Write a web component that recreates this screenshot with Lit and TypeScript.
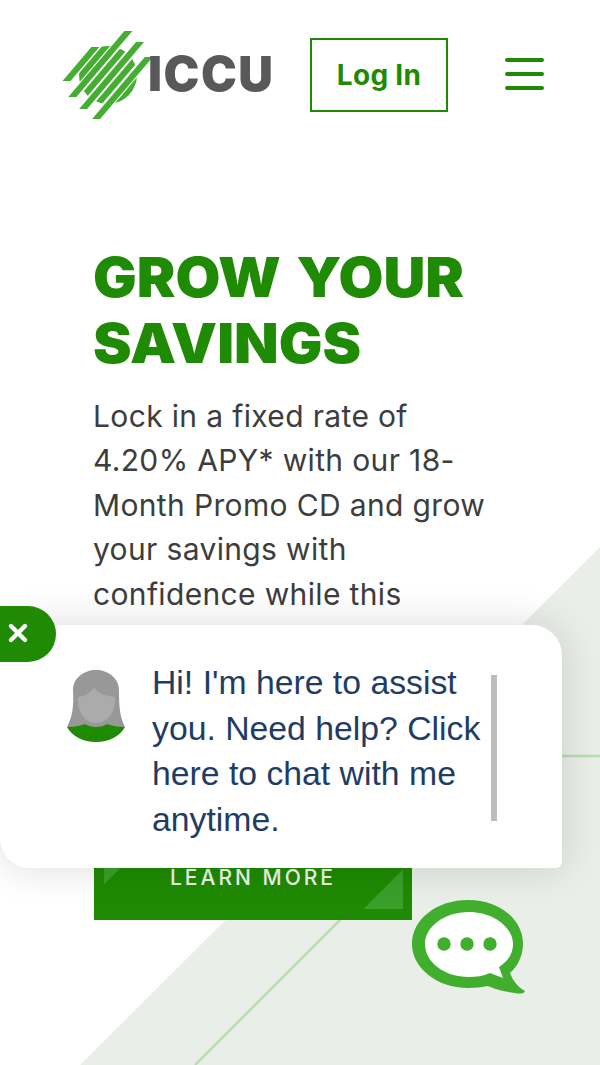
import { LitElement, html, css, svg } from "lit";
import { customElement } from "lit/decorators.js";

// logo stripes: left edge x where each one crosses y=75, then top and bottom y
const LONG_STRIPES = [
  [67.6, 47, 81],
  [87, 31, 97],
  [108, 42, 109],
  [129.5, 57, 119],
];
// these sit between the long ones and get cut by the circle
const SHORT_STRIPES = [77.5, 97.5, 118.5, 139];

const stripe = (x75: number, top: number, bottom: number) => {
  const xTop = x75 + (75 - top) * 0.85;
  const xBottom = x75 - (bottom - 75) * 0.85;
  return svg`<polygon points="${xBottom},${bottom} ${xBottom + 8},${bottom} ${xTop + 8},${top} ${xTop},${top}" fill="#45ad32"></polygon>`;
};

@customElement("app-root")
export class AppRoot extends LitElement {
  static styles = css`
    :host {
      display: block;
      position: relative;
      height: 1065px;
      overflow: hidden;
      background: #fff;
      font-family: "Inter", "Liberation Sans", sans-serif;
    }
    .backdrop {
      position: absolute;
      inset: 0;
    }
    .page {
      position: relative;
    }
    header {
      display: flex;
      align-items: center;
      height: 150px;
      padding-left: 62px;
    }
    .logo {
      width: 248px;
    }
    .logo svg {
      display: block;
      filter: blur(0.6px);
    }
    .login {
      box-sizing: border-box;
      display: flex;
      align-items: center;
      justify-content: center;
      width: 138px;
      height: 74px;
      border: 2px solid #1f8a03;
      color: #1f8a03;
      font-size: 28px;
      font-weight: 700;
      letter-spacing: 0.3px;
    }
    .burger {
      display: flex;
      flex-direction: column;
      gap: 10px;
      width: 39px;
      margin: 0 0 2px 57px;
    }
    .burger span {
      height: 4px;
      border-radius: 2px;
      background: #1f8a03;
    }
    .hero {
      padding: 94px 0 0 93px;
    }
    h1 {
      margin: 0;
      width: 400px;
      color: #1f8a03;
      font-size: 55px;
      line-height: 66px;
      font-weight: 900;
      word-spacing: 4px;
      transform: scaleX(1.055);
      transform-origin: left;
    }
    p {
      margin: 18px 0 0;
      width: 408px;
      color: #3d3d3d;
      font-size: 30px;
      line-height: 44.4px;
      letter-spacing: 0.35px;
    }
    .cta {
      position: relative;
      display: flex;
      justify-content: center;
      box-sizing: border-box;
      width: 318px;
      height: 86px;
      margin: 174px 0 0 1px;
      padding-top: 31px;
      background: #1f8a03;
      color: #eef6ea;
      font-size: 21px;
      font-weight: 500;
      letter-spacing: 3px;
    }
    .cta i {
      position: absolute;
      right: 9px;
      bottom: 11px;
      width: 40px;
      height: 40px;
      background: #3aa02a;
      clip-path: polygon(100% 0, 100% 100%, 0 100%);
    }
    .cta b {
      position: absolute;
      left: 10px;
      top: 10px;
      width: 40px;
      height: 40px;
      background: #3aa02a;
      clip-path: polygon(0 0, 100% 0, 0 100%);
    }
    .chat {
      position: absolute;
      left: 0;
      top: 625px;
      box-sizing: border-box;
      display: flex;
      width: 562px;
      height: 243px;
      padding: 37px 65px 0 60px;
      background: #fff;
      border-radius: 30px 30px 6px 30px;
      box-shadow: 0 0 40px rgba(0, 0, 0, 0.14);
    }
    .avatar {
      flex: none;
      width: 73px;
      height: 73px;
      margin: 8px 19px 0 0;
    }
    .message {
      flex: 1;
      margin-top: -2px;
      color: #1f3d63;
      font-family: "Liberation Sans", Arial, sans-serif;
      font-size: 33.75px;
      line-height: 45.5px;
    }
    .thumb {
      position: absolute;
      left: 491px;
      top: 50px;
      width: 6px;
      height: 146px;
      background: #bdbdbd;
    }
    .close {
      position: absolute;
      left: -30px;
      top: 606px;
      display: flex;
      align-items: center;
      justify-content: flex-end;
      box-sizing: border-box;
      width: 86px;
      height: 56px;
      padding: 0 26px 2px 0;
      border-radius: 28px;
      background: #1f8a03;
    }
    .bubble {
      position: absolute;
      left: 412px;
      top: 900px;
    }
  `;

  render() {
    return html`
      <svg class="backdrop" width="600" height="1065" viewBox="0 0 600 1065">
        <polygon points="600,547 600,1065 80,1065" fill="#e9efe8"></polygon>
        <polyline
          points="600,756 504,756 195,1065"
          fill="none"
          stroke="#b7dcae"
          stroke-width="2.5"
        ></polyline>
      </svg>
      <div class="page">
        <header>
          <div class="logo">
            <svg width="212" height="100" viewBox="62 25 212 100">
              <defs>
                <clipPath id="blob"><circle cx="108" cy="75" r="29"></circle></clipPath>
              </defs>
              ${LONG_STRIPES.map(([x, top, bottom]) => stripe(x, top, bottom))}
              <g clip-path="url(#blob)">
                ${SHORT_STRIPES.map((x) => stripe(x, 30, 120))}
              </g>
              <text
                x="148"
                y="91"
                font-family="Inter, sans-serif"
                font-size="48"
                font-weight="900"
                fill="#58595b"
                textLength="125"
              >ICCU</text>
            </svg>
          </div>
          <div class="login">Log In</div>
          <div class="burger"><span></span><span></span><span></span></div>
        </header>
        <section class="hero">
          <h1>GROW YOUR SAVINGS</h1>
          <p>
            Lock in a fixed rate of 4.20% APY* with our 18-Month Promo CD and
            grow your savings with confidence while this limited time offer
            lasts.
          </p>
          <div class="cta"><b></b>LEARN MORE<i></i></div>
        </section>
      </div>
      <div class="chat">
        <svg class="avatar" viewBox="0 0 73 73">
          <path
            d="M7 57 C12 47 14 38 13 20 C13 8 24 0 36 0 C48 0 59 8 59 20 C59 38 60 47 65 57 Z"
            fill="#989898"
          ></path>
          <path
            d="M18 27 C25 26 30 23 34 18 C38 23 46 26 55 27 C56 42 48 53 36 53 C25 53 17 42 18 27 Z"
            fill="#ababab"
          ></path>
          <path
            d="M7 57 C14 57 20 56 25 54 C31 58 41 58 47 54 C52 56 58 57 65 57 C60 66 49 72 36 72 C23 72 12 66 7 57 Z"
            fill="#1f8a03"
          ></path>
        </svg>
        <div class="message">
          Hi! I'm here to assist you. Need help? Click here to chat with me
          anytime.
        </div>
        <div class="thumb"></div>
      </div>
      <div class="close">
        <svg width="24" height="24" viewBox="0 0 24 24">
          <path
            d="M5 5 L19 19 M19 5 L5 19"
            stroke="#fff"
            stroke-width="4.4"
            stroke-linecap="round"
          ></path>
        </svg>
      </div>
      <svg class="bubble" width="114" height="95" viewBox="0 0 114 95">
        <path
          d="M56 0 C87 0 111 19 111 44 C111 55 106 66 98 73 C101 81 106 87 113 91 C112 94 108 94 103 93 C94 92 85 90 76 86 C70 87 63 88 56 88 C25 88 0 68 0 44 C0 19 25 0 56 0 Z"
          fill="#41ae2d"
        ></path>
        <path
          d="M57 12 C81 12 101 27 101 44 C101 54 96 61 87 67 L91 78 L78 73 C71 76 64 77 57 77 C32 77 13 62 13 44 C13 27 32 12 57 12 Z"
          fill="#fff"
        ></path>
        <circle cx="32" cy="44" r="6.7" fill="#41ae2d"></circle>
        <circle cx="55" cy="44" r="6.7" fill="#41ae2d"></circle>
        <circle cx="78" cy="44" r="6.7" fill="#41ae2d"></circle>
      </svg>
    `;
  }
}
